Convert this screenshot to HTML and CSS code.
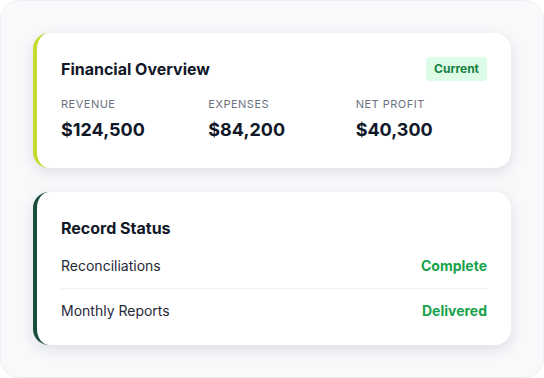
FILE: index.html
```html
<!DOCTYPE html>
<html lang="en">
<head>
    <meta charset="UTF-8">
    <meta name="viewport" content="width=device-width, initial-scale=1.0">
    <title>Financial Overview</title>
    <link rel="stylesheet" href="styles.css">
</head>
<body>
    <div class="panel">
        <div class="card card-finance">
            <div class="card-header">
                <h2>Financial Overview</h2>
                <span class="badge">Current</span>
            </div>
            <div class="stats">
                <div class="stat">
                    <div class="stat-label">Revenue</div>
                    <div class="stat-value">$124,500</div>
                </div>
                <div class="stat">
                    <div class="stat-label">Expenses</div>
                    <div class="stat-value">$84,200</div>
                </div>
                <div class="stat">
                    <div class="stat-label">Net Profit</div>
                    <div class="stat-value">$40,300</div>
                </div>
            </div>
        </div>

        <div class="card card-records">
            <h2>Record Status</h2>
            <div class="row">
                <span>Reconciliations</span>
                <span class="status">Complete</span>
            </div>
            <div class="row">
                <span>Monthly Reports</span>
                <span class="status">Delivered</span>
            </div>
        </div>
    </div>
</body>
</html>
```

FILE: styles.css
```css
* {
    box-sizing: border-box;
}
body {
    margin: 0;
    background-color: #ffffff;
    font-family: Inter, "Noto Sans", sans-serif;
    color: #111827;
}
.panel {
    width: 544px;
    height: 378px;
    background-color: #f8f9fb;
    border: 1px solid #eceef1;
    border-radius: 20px;
    padding: 32px;
    display: flex;
    flex-direction: column;
    gap: 24px;
}
.card {
    background-color: #fff;
    border-radius: 16px;
    border-left: 4px solid #c5da2e;
    padding: 24px;
    box-shadow: 0 4px 14px rgba(17, 24, 39, 0.12);
}
.card-records {
    border-left-color: #1b4d3e;
}
h2 {
    margin: 0;
    font-size: 16px;
    line-height: 24px;
    font-weight: 700;
}
.card-header {
    display: flex;
    justify-content: space-between;
    align-items: center;
    margin-bottom: 15px;
}
.badge {
    background-color: #dcfce7;
    color: #15803d;
    font-size: 12px;
    font-weight: 700;
    line-height: 24px;
    padding: 0 8px;
    border-radius: 4px;
}
.stats {
    display: grid;
    grid-template-columns: repeat(3, 1fr);
    gap: 16px;
}
.stat-label {
    font-size: 11px;
    line-height: 16px;
    color: #6b7280;
    text-transform: uppercase;
    letter-spacing: 0.5px;
    margin-bottom: 4px;
}
.stat-value {
    font-size: 18px;
    line-height: 28px;
    font-weight: 700;
}
.card-records h2 {
    margin-bottom: 16px;
}
.row {
    display: flex;
    justify-content: space-between;
    font-size: 14px;
    line-height: 20px;
    color: #1f2937;
    padding-bottom: 12px;
    border-bottom: 1px solid #eef0f3;
}
.row + .row {
    padding-top: 12px;
    padding-bottom: 0;
    border-bottom: none;
}
.status {
    color: #16a34a;
    font-weight: 700;
}
```
